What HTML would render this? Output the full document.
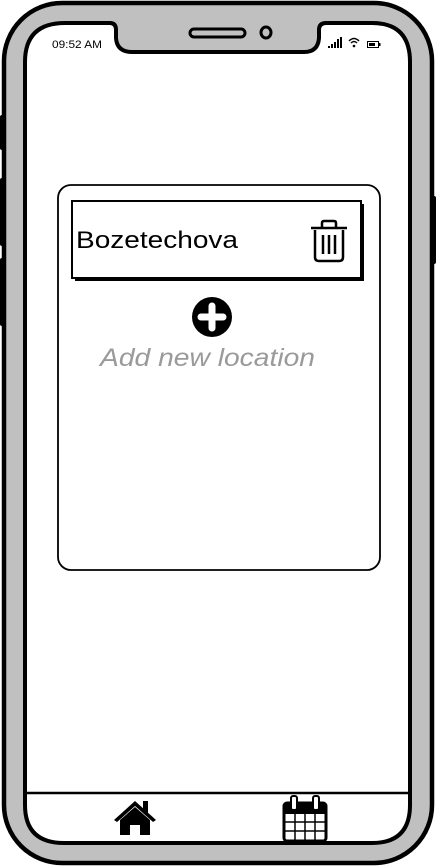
<!DOCTYPE html>
<html><head><meta charset="utf-8"><style>
html,body{margin:0;padding:0;background:#fff;width:436px;height:867px;overflow:hidden}
svg{display:block}
</style></head><body>
<svg width="436" height="867" viewBox="0 0 436 867" xmlns="http://www.w3.org/2000/svg">
<rect x="0" y="115" width="5" height="35" rx="2" fill="#000"/>
<rect x="0" y="178" width="5" height="68" rx="2" fill="#000"/>
<rect x="0" y="258" width="5" height="68" rx="2" fill="#000"/>
<rect x="431" y="196" width="5" height="68" rx="2" fill="#000"/>
<rect x="4" y="3" width="428" height="860" rx="58" fill="#c0c0c0" stroke="#000" stroke-width="4.5"/>
<path d="M65 23 H110 Q116 23 116 30 V38 Q117 52 132 52 H304 Q318 52 319 38 V30 Q319 23 326 23 H372 Q410 23 410 62 V805 Q410 843 372 843 H64 Q25 843 25 805 V62 Q25 23 65 23 Z" fill="#fff" stroke="#000" stroke-width="4"/>
<rect x="190" y="29" width="55" height="8" rx="4" fill="none" stroke="#000" stroke-width="3"/>
<ellipse cx="266" cy="32.5" rx="5" ry="5.5" fill="none" stroke="#000" stroke-width="3"/>
<text x="52" y="48" font-family="Liberation Sans, sans-serif" font-size="11" fill="#000" textLength="50" lengthAdjust="spacingAndGlyphs">09:52 AM</text>
<g fill="#000">
<rect x="328" y="46" width="2" height="2"/><rect x="331" y="44" width="2" height="4"/><rect x="334" y="42" width="2" height="6"/><rect x="337" y="39" width="2" height="9"/><rect x="340" y="37" width="2" height="11"/>
</g>
<path d="M349 41 Q354 36 359 41 M351 43 Q354 40 357 43" fill="none" stroke="#000" stroke-width="1.5"/>
<circle cx="354" cy="46" r="1.3" fill="#000"/>
<rect x="367.5" y="41.5" width="11" height="6" fill="none" stroke="#000" stroke-width="1"/>
<rect x="369" y="43" width="6" height="3" fill="#000"/>
<rect x="379" y="43" width="1.5" height="3" fill="#000"/>
<rect x="58" y="185" width="322" height="385" rx="13" fill="#fff" stroke="#000" stroke-width="1.8"/>
<rect x="75" y="204" width="289" height="77" fill="#000"/>
<rect x="72" y="201" width="289" height="77" fill="#fff" stroke="#000" stroke-width="2"/>
<text x="76" y="248" font-family="Liberation Sans, sans-serif" font-size="24" fill="#000" textLength="162" lengthAdjust="spacingAndGlyphs">Bozetechova</text>
<g fill="none" stroke="#000" stroke-width="2.5" stroke-linejoin="round">
<path d="M311 228 H347"/>
<path d="M322 227 V223 Q322 221 324 221 H334 Q336 221 336 223 V227"/>
<path d="M315 230 V257 Q315 261 319 261 H339 Q343 261 343 257 V230"/>
<path d="M323 235 V254 M329 235 V254 M335 235 V254"/>
</g>
<circle cx="212" cy="317" r="20" fill="#000"/>
<path d="M212 306 V328 M201 317 H223" stroke="#fff" stroke-width="7" stroke-linecap="round"/>
<text x="100" y="366" font-family="Liberation Sans, sans-serif" font-style="italic" font-size="25" fill="#9a9a9a" textLength="215" lengthAdjust="spacingAndGlyphs">Add new location</text>
<line x1="27" y1="793" x2="410" y2="793" stroke="#000" stroke-width="2.5"/>
<g fill="#000">
<path d="M114 820 L135 801 L156 820 L153 822 L135 806 L117 822 Z"/>
<rect x="143" y="801" width="5" height="12"/>
<path d="M120 820 L135 807 L150 820 V835 H140 V825 H130 V835 H120 Z"/>
</g>
<g>
<rect x="284" y="803" width="42" height="38" rx="3" fill="#fff" stroke="#000" stroke-width="3"/>
<rect x="284" y="803" width="42" height="11" fill="#000"/>
<rect x="291" y="796" width="6" height="14" rx="2" fill="#fff" stroke="#000" stroke-width="2"/>
<rect x="313" y="796" width="6" height="14" rx="2" fill="#fff" stroke="#000" stroke-width="2"/>
<path d="M295 814 V840 M305 814 V840 M315 814 V840 M285 822 H325 M285 831 H325" stroke="#000" stroke-width="1.5"/>
</g>
</svg>
</body></html>
